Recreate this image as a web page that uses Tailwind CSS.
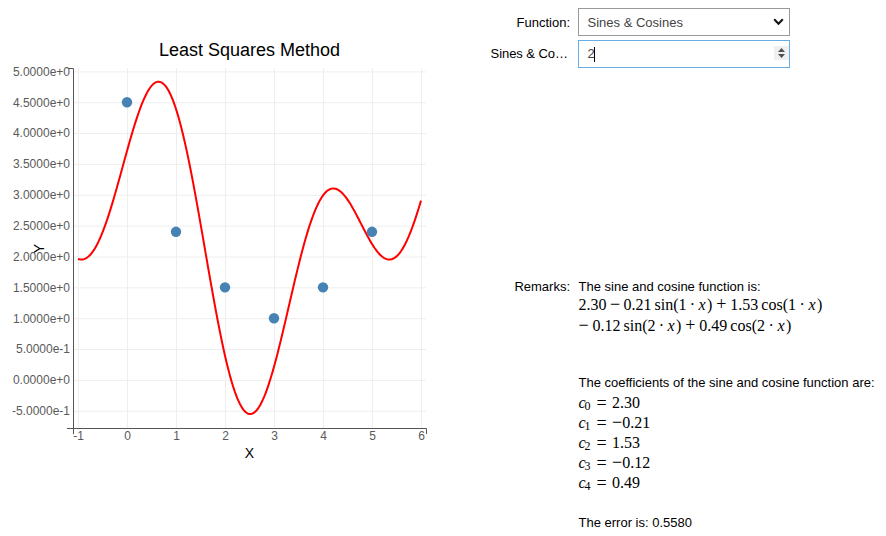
<!DOCTYPE html>
<html lang="en">
<head>
<meta charset="utf-8">
<title>Least Squares Method</title>
<script src="https://cdn.jsdelivr.net/npm/@tailwindcss/browser@4"></script>
</head>
<body class="w-[886px] h-[536px] overflow-hidden bg-white text-black font-['Liberation_Sans',sans-serif] text-[13px] leading-[16px]">
<main class="flex h-full w-full">
  <svg id="chart" class="block h-[536px] w-[440px] shrink-0" viewBox="0 0 440 536">
    <text x="159" y="56" font-size="18" textLength="181">Least Squares Method</text>
    <g id="grid" stroke="#eeeeee" stroke-width="1" fill="none"></g>
    <g stroke="#555555" stroke-width="1" fill="none">
      <path d="M68 68.5H73.5V434"/>
      <path d="M67 428.5H426.5V434"/>
    </g>
    <g id="labels" font-size="12" fill="#5a5a5a"></g>
    <path id="curve" fill="none" stroke="#ff0000" stroke-width="2"/>
    <g id="points" fill="#4682b4"></g>
    <text x="249.5" y="458" font-size="14" text-anchor="middle">X</text>
    <text transform="translate(44 248.5) rotate(-90)" font-size="14" text-anchor="middle">Y</text>
  </svg>
  <section class="flex w-[446px] shrink-0 flex-col pt-2">
    <div class="flex h-7 items-center">
      <label class="w-[130px] shrink-0 pt-px text-right">Function:</label>
      <div class="ml-2 flex h-7 w-[212px] items-center justify-between border border-[#999999] pl-[8.5px] pr-[5px] text-[#444444]">
        <span class="pt-px">Sines &amp; Cosines</span>
        <svg class="h-[8px] w-[11px]" viewBox="0 0 11 8"><path d="M1.2 1.3L5.5 5.8L9.8 1.3" fill="none" stroke="#111" stroke-width="2"/></svg>
      </div>
    </div>
    <div class="mt-1 flex h-7 items-center">
      <label class="w-[130px] shrink-0 pr-[2px] text-right tracking-[-0.05px]">Sines &amp; Co…</label>
      <div class="ml-2 flex h-7 w-[212px] items-center justify-between border border-[#66afe9] pl-[8.5px] text-[#444444]">
        <span class="flex items-center"><span>2</span><span class="-ml-px h-[15px] w-px bg-black"></span></span>
        <svg class="mt-[-2px] h-[14px] w-[15px] bg-[#f0f0f0]" viewBox="0 0 15 14"><path d="M4 6L7.5 2L11 6ZM4 8L7.5 12L11 8Z" fill="#505050"/></svg>
      </div>
    </div>
    <div class="mt-[211px] flex items-start">
      <div class="w-[130px] shrink-0 text-right">Remarks:</div>
      <div class="ml-[8.5px] whitespace-nowrap">
        <div>The sine and cosine function is:</div>
        <div class="-mt-px flex h-[21px] font-['Liberation_Serif',serif] text-[16px] leading-[21px]"><span>2.30</span><span class="w-[17px] text-center text-[18px]">−</span><span>0.21</span><span class="ml-[3px]">sin(1</span><span class="w-[12px] text-center">·</span><i class="w-[8.5px]">x</i><span>)</span><span class="w-[18px] text-center text-[18px]">+</span><span>1.53</span><span class="ml-[3px]">cos(1</span><span class="w-[12.5px] text-center">·</span><i class="w-[8.5px]">x</i><span>)</span></div>
        <div class="flex h-[21px] font-['Liberation_Serif',serif] text-[16px] leading-[21px]"><span class="w-[14px] text-[18px]">−</span><span>0.12</span><span class="ml-[3px]">sin(2</span><span class="w-[12px] text-center">·</span><i class="w-[8.5px]">x</i><span>)</span><span class="w-[18px] text-center text-[18px]">+</span><span>0.49</span><span class="ml-[3px]">cos(2</span><span class="w-[12.5px] text-center">·</span><i class="w-[8.5px]">x</i><span>)</span></div>
        <div class="mt-[39px]">The coefficients of the sine and cosine function are:</div>
        <div class="mt-[2px] grid auto-rows-[20px] grid-cols-[18px_15.5px_1fr] font-['Liberation_Serif',serif] text-[16px] leading-[20px]">
          <span><i>c</i><sub class="-ml-px text-[12px] leading-none bottom-[-1.5px]">0</sub></span><span class="text-[18px]">=</span><span>2.30</span>
          <span><i>c</i><sub class="-ml-px text-[12px] leading-none bottom-[-1.5px]">1</sub></span><span class="text-[18px]">=</span><span><span class="text-[18px] leading-none">−</span>0.21</span>
          <span><i>c</i><sub class="-ml-px text-[12px] leading-none bottom-[-1.5px]">2</sub></span><span class="text-[18px]">=</span><span>1.53</span>
          <span><i>c</i><sub class="-ml-px text-[12px] leading-none bottom-[-1.5px]">3</sub></span><span class="text-[18px]">=</span><span><span class="text-[18px] leading-none">−</span>0.12</span>
          <span><i>c</i><sub class="-ml-px text-[12px] leading-none bottom-[-1.5px]">4</sub></span><span class="text-[18px]">=</span><span>0.49</span>
        </div>
        <div class="mt-[22px]">The error is: 0.5580</div>
      </div>
    </div>
  </section>
</main>
<script>
const NS = 'http://www.w3.org/2000/svg';
const $ = id => document.getElementById(id);
function add(parent, tag, attrs, text) {
  const el = document.createElementNS(NS, tag);
  for (const k in attrs) el.setAttribute(k, attrs[k]);
  if (text !== undefined) el.textContent = text;
  parent.appendChild(el);
}
const sx = x => 127 + 49 * x, sy = y => 379.9 - 61.7 * y;
for (let x = -1; x <= 6; x++) {
  add($('grid'), 'path', {d: `M${sx(x) + .5} 68V428`});
  add($('labels'), 'text', {x: sx(x) + .5, y: 440, 'text-anchor': 'middle'}, x);
}
['5.0000e+0','4.5000e+0','4.0000e+0','3.5000e+0','3.0000e+0','2.5000e+0','2.0000e+0','1.5000e+0','1.0000e+0','5.0000e-1','0.0000e+0','-5.0000e-1'].forEach((t, i) => {
  const y = sy(5 - i / 2) + .5;
  add($('grid'), 'path', {d: `M74 ${y}H426`});
  add($('labels'), 'text', {x: 70, y: Math.round(y + 3.9), 'text-anchor': 'end'}, t);
});
let d = '';
for (let i = 0; i <= 280; i++) {
  const x = -1 + i / 40;
  const y = 2.30 - .21 * Math.sin(x) + 1.53 * Math.cos(x) + 1.53 * Math.sin(2 * x) - .12 * Math.cos(2 * x);
  d += (i ? 'L' : 'M') + sx(x).toFixed(2) + ' ' + sy(y).toFixed(2);
}
$('curve').setAttribute('d', d);
[4.5, 2.4, 1.5, 1, 1.5, 2.4].forEach((y, x) => add($('points'), 'circle', {cx: sx(x), cy: sy(y), r: 5.2}));
</script>
</body>
</html>
